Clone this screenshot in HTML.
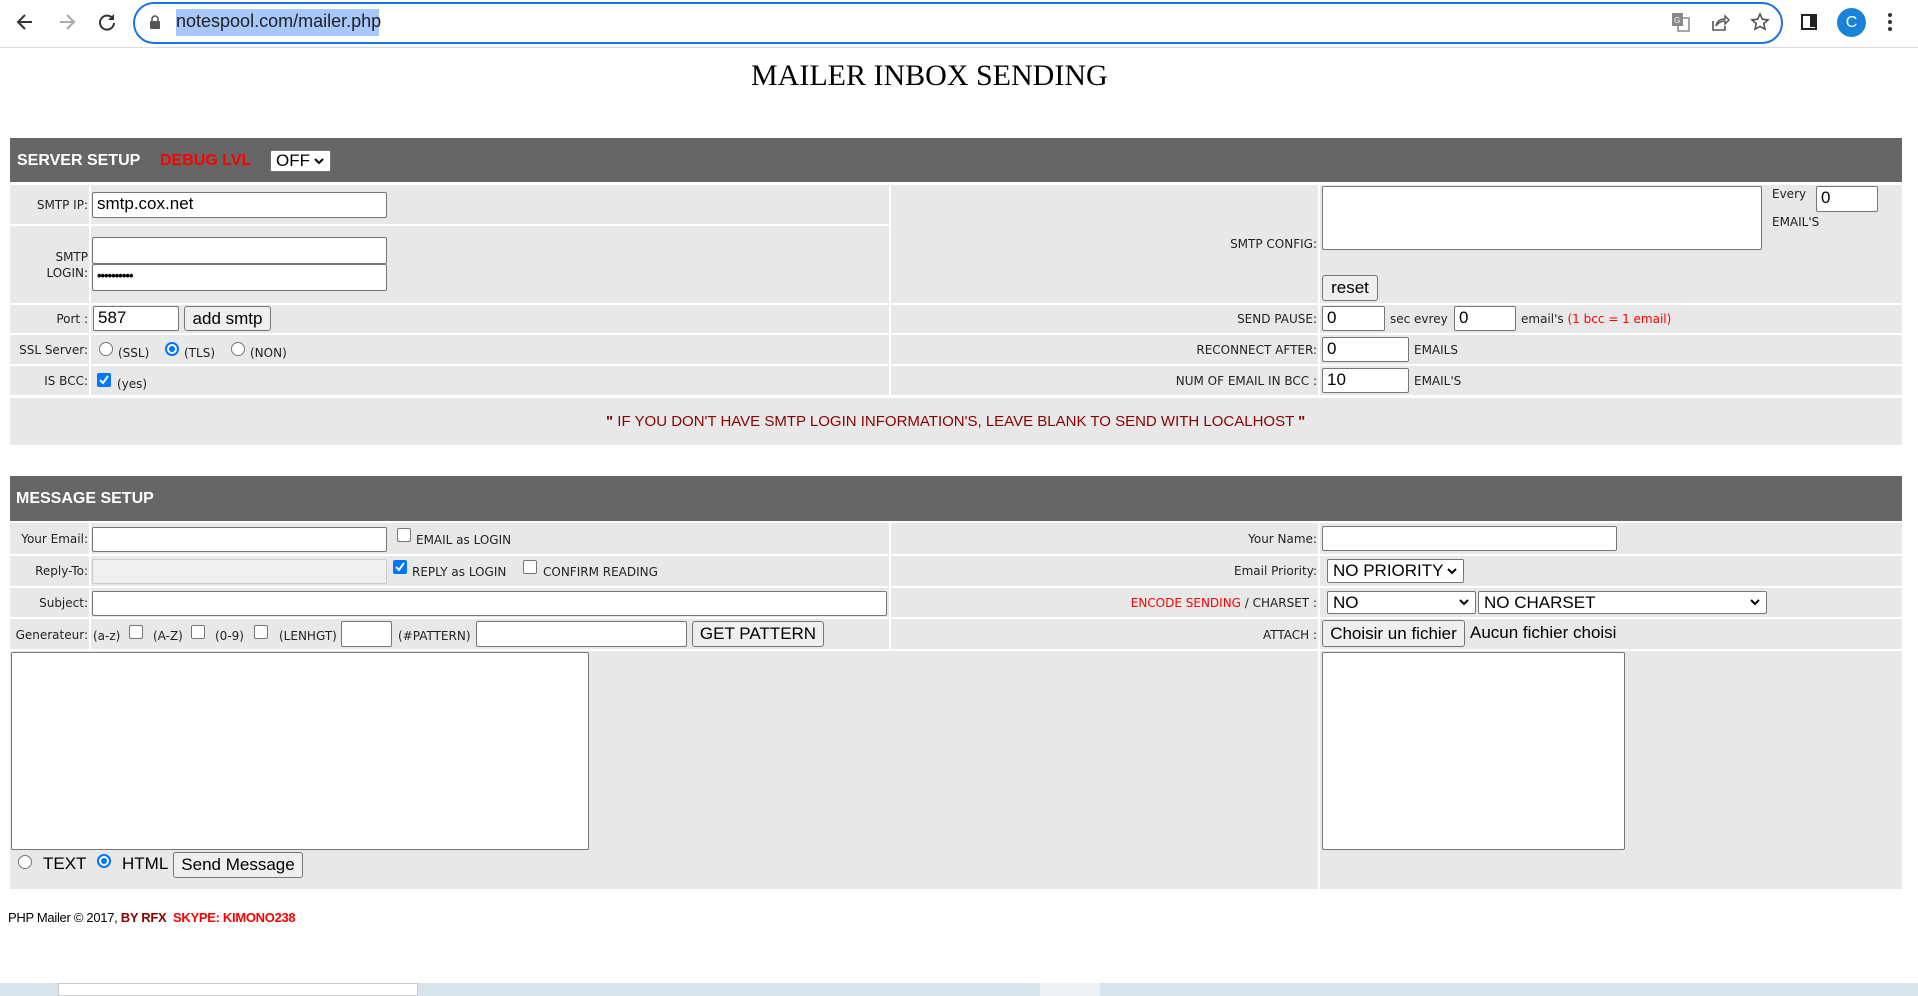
<!DOCTYPE html>
<html><head><meta charset="utf-8"><style>
*{box-sizing:border-box;margin:0;padding:0}
body{width:1918px;height:996px;position:relative;overflow:hidden;background:#fff;font-family:"DejaVu Sans","Liberation Sans",sans-serif;font-size:12px;color:#222}
.a{position:absolute}
.c{position:absolute;background:#e8e8e8}
.h{position:absolute;background:#666;color:#fff;font-family:"Liberation Sans",sans-serif;font-weight:bold;font-size:16px}
.i{position:absolute;background:#fff;border:1px solid #767676;border-radius:2px;font-family:"Liberation Sans",sans-serif;font-size:17px;padding-left:4px;line-height:22px;color:#000}
.b{position:absolute;background:#efefef;border:1px solid #767676;border-radius:3px;font-family:"Liberation Sans",sans-serif;font-size:17px;text-align:center;color:#000}
.l{position:absolute;white-space:nowrap;font-size:12px}
.r{text-align:right}
.cb{position:absolute;width:14px;height:14px;border:1px solid #767676;border-radius:2px;background:#fff}
.cbk{position:absolute;width:14px;height:14px;border-radius:2px;background:#0075ff}
.rd{position:absolute;width:14px;height:14px;border:1px solid #767676;border-radius:50%;background:#fff}
.rdk{position:absolute;width:14px;height:14px;border:2px solid #0075ff;border-radius:50%;background:#fff}
.rdk:after{content:"";position:absolute;left:2px;top:2px;width:6px;height:6px;border-radius:50%;background:#0075ff}
.sel{position:absolute;background:#fff;border:1px solid #767676;border-radius:2px;font-family:"Liberation Sans",sans-serif;font-size:17px;padding-left:5px;color:#000}
.sel svg{position:absolute;right:6px;top:8px}
</style></head><body>
<div class="a" style="left:0;top:0;width:1918px;height:48px;background:#fff;border-bottom:1px solid #dadce0"></div>
<svg class="a" style="left:14px;top:11px" width="22" height="22" viewBox="0 0 22 22"><path d="M18 11H5M11 4l-7 7 7 7" stroke="#333" stroke-width="2" fill="none"/></svg>
<svg class="a" style="left:56px;top:11px" width="22" height="22" viewBox="0 0 22 22"><path d="M4 11h13M11 4l7 7-7 7" stroke="#aaa" stroke-width="2" fill="none"/></svg>
<svg class="a" style="left:96px;top:11px" width="22" height="22" viewBox="0 0 22 22"><path d="M17 8a7 7 0 1 0 1 4" stroke="#333" stroke-width="2" fill="none"/><path d="M18 3v6h-6z" fill="#333"/></svg>
<div class="a" style="left:133px;top:2px;width:1650px;height:42px;border:2.5px solid #1a73e8;border-radius:22px"></div>
<svg class="a" style="left:149px;top:15px" width="12" height="15" viewBox="0 0 12 15"><rect x="1" y="6" width="10" height="8" rx="1" fill="#555"/><path d="M3 6V4a3 3 0 0 1 6 0v2" stroke="#555" stroke-width="1.6" fill="none"/></svg>
<div class="a" style="left:176px;top:9px;width:203px;height:27px;background:#a8c7fa"></div>
<div class="a" style="left:176px;top:11px;font-family:'Liberation Sans',sans-serif;font-size:18px;color:#202124">notespool.com/mailer.php</div>
<svg class="a" style="left:1671px;top:12px" width="20" height="20" viewBox="0 0 20 20"><rect x="1" y="1" width="11" height="13" fill="#888"/><rect x="7" y="6" width="11" height="13" fill="none" stroke="#888" stroke-width="1.5"/><text x="3" y="11" font-size="8" fill="#fff" font-family="Liberation Sans">G</text></svg>
<svg class="a" style="left:1710px;top:12px" width="20" height="20" viewBox="0 0 20 20"><path d="M3 9v9h12v-4" stroke="#555" stroke-width="1.6" fill="none"/><path d="M6 14c1-5 4-7 9-7V4l4 4-4 4V9c-4 0-7 2-9 5z" stroke="#555" stroke-width="1.4" fill="none"/></svg>
<svg class="a" style="left:1750px;top:12px" width="20" height="20" viewBox="0 0 20 20"><path d="M10 2l2.4 5.2 5.6.6-4.2 3.8 1.2 5.6L10 14.4 5 17.2l1.2-5.6L2 7.8l5.6-.6z" stroke="#555" stroke-width="1.6" fill="none"/></svg>
<div class="a" style="left:1801px;top:14px;width:16px;height:16px;border:2.5px solid #222"><div style="position:absolute;right:0;top:0;width:5px;height:11px;background:#222"></div></div>
<div class="a" style="left:1837px;top:8px;width:29px;height:29px;border-radius:50%;background:#1a82d9;color:#fff;font-family:'Liberation Sans',sans-serif;font-size:16px;text-align:center;line-height:29px">C</div>
<div class="a" style="left:1888px;top:13px;width:4px;height:4px;border-radius:50%;background:#333;box-shadow:0 7px 0 #333,0 14px 0 #333"></div>

<div class="a" style="left:751px;top:59px;font-family:'Liberation Serif',serif;font-size:30px;color:#000">MAILER INBOX SENDING</div>

<div class="h" style="left:10px;top:138px;width:1892px;height:44px"><span class="a" style="left:7px;top:14px">SERVER SETUP</span><span class="a" style="left:150px;top:14px;color:#ff0000">DEBUG LVL</span></div>
<div class="sel" style="left:270px;top:150px;width:61px;height:22px;line-height:20px">OFF<svg width="10" height="7" viewBox="0 0 10 7" style="top:7px"><path d="M1 1l4 4 4-4" stroke="#000" stroke-width="2" fill="none"/></svg></div>

<div class="c" style="left:10px;top:185px;width:79px;height:39px"></div>
<div class="c" style="left:91px;top:185px;width:798px;height:39px"></div>
<div class="c" style="left:10px;top:226px;width:79px;height:77px"></div>
<div class="c" style="left:91px;top:226px;width:798px;height:77px"></div>
<div class="c" style="left:891px;top:185px;width:427px;height:118px"></div>
<div class="c" style="left:1320px;top:185px;width:582px;height:118px"></div>
<div class="l r" style="left:10px;top:198px;width:78px">SMTP IP:</div>
<div class="i" style="left:92px;top:192px;width:295px;height:26px">smtp.cox.net</div>
<div class="l r" style="left:10px;top:250px;width:78px">SMTP</div>
<div class="l r" style="left:10px;top:266px;width:78px">LOGIN:</div>
<div class="i" style="left:92px;top:237px;width:295px;height:27px"></div>
<div class="i" style="left:92px;top:264px;width:295px;height:27px;font-size:13px;font-weight:bold;letter-spacing:-1px">••••••••••</div>
<div class="l r" style="left:891px;top:237px;width:426px">SMTP CONFIG:</div>
<div class="i" style="left:1322px;top:186px;width:440px;height:64px"></div>
<div class="l" style="left:1772px;top:187px">Every</div>
<div class="i" style="left:1816px;top:186px;width:62px;height:26px">0</div>
<div class="l" style="left:1772px;top:215px">EMAIL'S</div>
<div class="b" style="left:1322px;top:275px;width:56px;height:26px;line-height:24px">reset</div>

<div class="c" style="left:10px;top:305px;width:79px;height:28px"></div>
<div class="c" style="left:91px;top:305px;width:798px;height:28px"></div>
<div class="c" style="left:891px;top:305px;width:427px;height:28px"></div>
<div class="c" style="left:1320px;top:305px;width:582px;height:28px"></div>
<div class="l r" style="left:10px;top:312px;width:78px">Port :</div>
<div class="i" style="left:93px;top:306px;width:86px;height:25px">587</div>
<div class="b" style="left:184px;top:306px;width:87px;height:25px;line-height:23px">add smtp</div>
<div class="l r" style="left:891px;top:312px;width:426px">SEND PAUSE:</div>
<div class="i" style="left:1322px;top:306px;width:63px;height:25px">0</div>
<div class="l" style="left:1390px;top:312px">sec evrey</div>
<div class="i" style="left:1454px;top:306px;width:62px;height:25px">0</div>
<div class="l" style="left:1521px;top:312px">email's <span style="color:#ff0000">(1 bcc = 1 email)</span></div>

<div class="c" style="left:10px;top:335px;width:79px;height:29px"></div>
<div class="c" style="left:91px;top:335px;width:798px;height:29px"></div>
<div class="c" style="left:891px;top:335px;width:427px;height:29px"></div>
<div class="c" style="left:1320px;top:335px;width:582px;height:29px"></div>
<div class="l r" style="left:6px;top:343px;width:82px">SSL Server:</div>
<div class="rd" style="left:99px;top:342px"></div><div class="l" style="left:118px;top:346px">(SSL)</div>
<div class="rdk" style="left:165px;top:342px"></div><div class="l" style="left:184px;top:346px">(TLS)</div>
<div class="rd" style="left:231px;top:342px"></div><div class="l" style="left:250px;top:346px">(NON)</div>
<div class="l r" style="left:891px;top:343px;width:426px">RECONNECT AFTER:</div>
<div class="i" style="left:1322px;top:337px;width:87px;height:25px">0</div>
<div class="l" style="left:1414px;top:343px">EMAILS</div>

<div class="c" style="left:10px;top:366px;width:79px;height:29px"></div>
<div class="c" style="left:91px;top:366px;width:798px;height:29px"></div>
<div class="c" style="left:891px;top:366px;width:427px;height:29px"></div>
<div class="c" style="left:1320px;top:366px;width:582px;height:29px"></div>
<div class="l r" style="left:10px;top:374px;width:78px">IS BCC:</div>
<div class="cbk" style="left:97px;top:373px"><svg width="14" height="14" viewBox="0 0 14 14"><path d="M3 7l3 3 5-7" stroke="#fff" stroke-width="2" fill="none"/></svg></div>
<div class="l" style="left:117px;top:377px">(yes)</div>
<div class="l r" style="left:891px;top:374px;width:426px">NUM OF EMAIL IN BCC :</div>
<div class="i" style="left:1322px;top:368px;width:87px;height:25px">10</div>
<div class="l" style="left:1414px;top:374px">EMAIL'S</div>

<div class="c" style="left:10px;top:398px;width:1892px;height:47px"></div>
<div class="l" style="left:606px;top:413px;font-family:'Liberation Sans',sans-serif;font-size:15px;color:#8b0000"><b>"</b> IF YOU DON'T HAVE SMTP LOGIN INFORMATION'S, LEAVE BLANK TO SEND WITH LOCALHOST <b>"</b></div>

<div class="h" style="left:10px;top:476px;width:1892px;height:45px"><span class="a" style="left:6px;top:14px">MESSAGE SETUP</span></div>

<div class="c" style="left:10px;top:523px;width:79px;height:31px"></div>
<div class="c" style="left:91px;top:523px;width:798px;height:31px"></div>
<div class="c" style="left:891px;top:523px;width:427px;height:31px"></div>
<div class="c" style="left:1320px;top:523px;width:582px;height:31px"></div>
<div class="l r" style="left:10px;top:532px;width:78px">Your Email:</div>
<div class="i" style="left:92px;top:527px;width:295px;height:25px"></div>
<div class="cb" style="left:397px;top:528px"></div><div class="l" style="left:416px;top:533px">EMAIL as LOGIN</div>
<div class="l r" style="left:891px;top:532px;width:426px">Your Name:</div>
<div class="i" style="left:1322px;top:526px;width:295px;height:25px"></div>

<div class="c" style="left:10px;top:556px;width:79px;height:30px"></div>
<div class="c" style="left:91px;top:556px;width:798px;height:30px"></div>
<div class="c" style="left:891px;top:556px;width:427px;height:30px"></div>
<div class="c" style="left:1320px;top:556px;width:582px;height:30px"></div>
<div class="l r" style="left:10px;top:564px;width:78px">Reply-To:</div>
<div class="i" style="left:92px;top:559px;width:295px;height:25px;background:#f0f0f0;border-color:#ccc"></div>
<div class="cbk" style="left:393px;top:560px"><svg width="14" height="14" viewBox="0 0 14 14"><path d="M3 7l3 3 5-7" stroke="#fff" stroke-width="2" fill="none"/></svg></div>
<div class="l" style="left:412px;top:565px">REPLY as LOGIN</div>
<div class="cb" style="left:523px;top:560px"></div><div class="l" style="left:543px;top:565px">CONFIRM READING</div>
<div class="l r" style="left:891px;top:564px;width:426px">Email Priority:</div>
<div class="sel" style="left:1327px;top:559px;width:137px;height:24px;line-height:22px">NO PRIORITY<svg width="10" height="7" viewBox="0 0 10 7"><path d="M1 1l4 4 4-4" stroke="#000" stroke-width="2" fill="none"/></svg></div>

<div class="c" style="left:10px;top:588px;width:79px;height:29px"></div>
<div class="c" style="left:91px;top:588px;width:798px;height:29px"></div>
<div class="c" style="left:891px;top:588px;width:427px;height:29px"></div>
<div class="c" style="left:1320px;top:588px;width:582px;height:29px"></div>
<div class="l r" style="left:10px;top:596px;width:78px">Subject:</div>
<div class="i" style="left:92px;top:591px;width:795px;height:25px"></div>
<div class="l r" style="left:891px;top:596px;width:426px"><span style="color:#ff0000">ENCODE SENDING</span> / CHARSET :</div>
<div class="sel" style="left:1327px;top:591px;width:149px;height:23px;line-height:21px">NO<svg width="10" height="7" viewBox="0 0 10 7" style="top:7px"><path d="M1 1l4 4 4-4" stroke="#000" stroke-width="2" fill="none"/></svg></div>
<div class="sel" style="left:1478px;top:591px;width:289px;height:23px;line-height:21px">NO CHARSET<svg width="10" height="7" viewBox="0 0 10 7" style="top:7px"><path d="M1 1l4 4 4-4" stroke="#000" stroke-width="2" fill="none"/></svg></div>

<div class="c" style="left:10px;top:619px;width:79px;height:30px"></div>
<div class="c" style="left:91px;top:619px;width:798px;height:30px"></div>
<div class="c" style="left:891px;top:619px;width:427px;height:30px"></div>
<div class="c" style="left:1320px;top:619px;width:582px;height:30px"></div>
<div class="l r" style="left:4px;top:628px;width:84px">Generateur:</div>
<div class="l" style="left:93px;top:629px">(a-z)</div><div class="cb" style="left:129px;top:625px"></div>
<div class="l" style="left:153px;top:629px">(A-Z)</div><div class="cb" style="left:191px;top:625px"></div>
<div class="l" style="left:215px;top:629px">(0-9)</div><div class="cb" style="left:254px;top:625px"></div>
<div class="l" style="left:279px;top:629px">(LENHGT)</div>
<div class="i" style="left:341px;top:621px;width:51px;height:26px"></div>
<div class="l" style="left:398px;top:629px">(#PATTERN)</div>
<div class="i" style="left:476px;top:621px;width:211px;height:26px"></div>
<div class="b" style="left:692px;top:621px;width:132px;height:26px;line-height:24px">GET PATTERN</div>
<div class="l r" style="left:891px;top:628px;width:426px">ATTACH :</div>
<div class="b" style="left:1322px;top:620px;width:143px;height:27px;line-height:25px">Choisir un fichier</div>
<div class="l" style="left:1470px;top:623px;font-family:'Liberation Sans',sans-serif;font-size:17px;color:#000">Aucun fichier choisi</div>

<div class="c" style="left:10px;top:651px;width:1308px;height:238px"></div>
<div class="c" style="left:1320px;top:651px;width:582px;height:238px"></div>
<div class="i" style="left:11px;top:652px;width:578px;height:198px"></div>
<div class="i" style="left:1322px;top:652px;width:303px;height:198px"></div>
<div class="rd" style="left:18px;top:855px"></div>
<div class="l" style="left:43px;top:854px;font-family:'Liberation Sans',sans-serif;font-size:17px;color:#000">TEXT</div>
<div class="rdk" style="left:97px;top:854px"></div>
<div class="l" style="left:122px;top:854px;font-family:'Liberation Sans',sans-serif;font-size:17px;color:#000">HTML</div>
<div class="b" style="left:173px;top:852px;width:130px;height:26px;line-height:24px">Send Message</div>

<div class="l" style="left:8px;top:910px;font-family:'Liberation Sans',sans-serif;font-size:13px;color:#000;letter-spacing:-0.3px">PHP Mailer © 2017, <b style="color:#8b0000">BY RFX</b> &nbsp;<b style="color:#ff0000">SKYPE: KIMONO238</b></div>

<div class="a" style="left:0;top:983px;width:1918px;height:13px;background:#d8e4ec"></div>
<div class="a" style="left:58px;top:983px;width:360px;height:13px;background:#fff;border:1px solid #ccc"></div>
<div class="a" style="left:1040px;top:983px;width:60px;height:13px;background:#eef2f5"></div>
</body></html>
